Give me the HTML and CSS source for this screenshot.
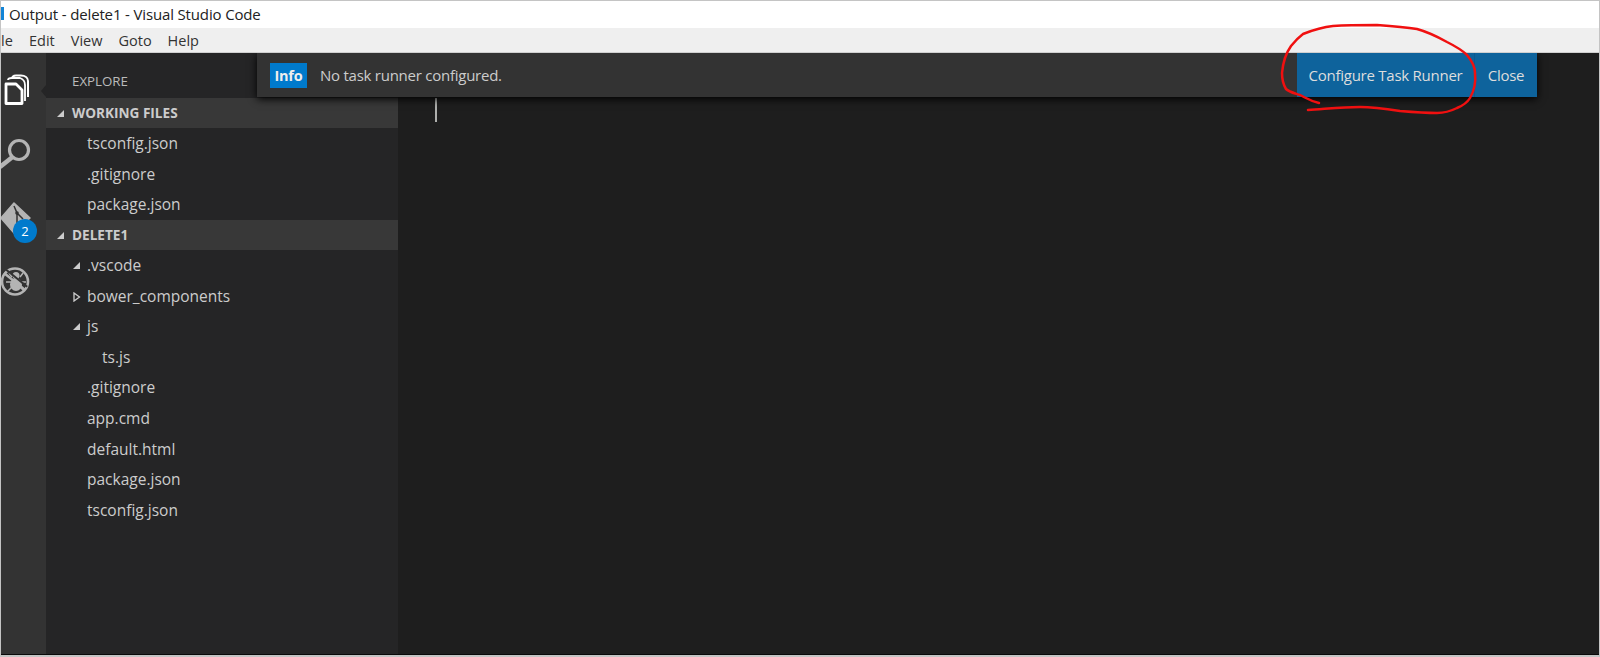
FILE: index.html
```html
<!DOCTYPE html>
<html lang="en">
<head>
<meta charset="utf-8">
<title>Output - delete1 - Visual Studio Code</title>
<link rel="stylesheet" href="styles.css">
</head>
<body>
<div class="window">
  <header class="titlebar"><span class="app-mark"></span><span class="title-text">Output - delete1 - Visual Studio Code</span></header>
  <nav class="menubar"><span class="menu-cut">le</span><span>Edit</span><span>View</span><span>Goto</span><span>Help</span></nav>
  <main class="workbench">
    <aside class="activity">
      <div class="action">
        <svg width="45" height="63" viewBox="0 0 45 63">
          <path d="M11 19 C11 16.500 13 15.500 15 15.500 H20 C24 15.500 27 17.500 27 21 V37" class="i-white" stroke-width="2"/>
          <path d="M7 20 C7 18.500 9 18 11 18 H19 C22 19 24 21 24 25 V41" class="i-white" stroke-width="1.800"/>
          <path d="M5 24 H15 L21 30 V43.500 H5 Z" class="i-white" stroke-width="2.800" stroke-linejoin="round"/>
        </svg>
      </div>
      <div class="action">
        <svg width="45" height="63" viewBox="0 0 45 63">
          <circle cx="18" cy="27" r="9.500" class="i-grey" stroke-width="3.200"/>
          <path d="M11.500 34 L-1 44" class="i-grey" stroke-width="4.500"/>
        </svg>
      </div>
      <div class="action">
        <svg width="45" height="63" viewBox="0 0 45 63">
          <path d="M13 17 L29 32 L13 47 L0 32 Z" fill="#b4b4b4" stroke="#b4b4b4" stroke-width="1.500" stroke-linejoin="round"/>
          <path d="M13 20 L16 27 V40 M16 27 L22 33" fill="none" stroke="#333" stroke-width="1.500"/>
          <circle cx="16" cy="27" r="1.800" fill="#333"/>
        </svg>
        <span class="badge">2</span>
      </div>
      <div class="action">
        <svg width="45" height="63" viewBox="0 0 45 63">
          <circle cx="14" cy="32.500" r="13" class="i-grey" stroke-width="2.600"/>
          <ellipse cx="15" cy="35.500" rx="6" ry="6.500" fill="#b4b4b4"/>
          <circle cx="15" cy="26.500" r="3.500" fill="#b4b4b4"/>
          <path d="M8 24 L11 28 M22 24 L19 28 M5 33 H10 M20 33 H25 M7 42 L11 38 M23 42 L19 38" class="i-grey" stroke-width="1.500"/>
          <path d="M4 22.500 L25 39.500" stroke="#333" stroke-width="2" fill="none" transform="translate(1.200 -1.800)"/>
          <path d="M3 24 L24 41" class="i-grey" stroke-width="2.600"/>
        </svg>
      </div>
    </aside>
    <section class="sidebar">
      <div class="sidebar-title">EXPLORE</div>
      <div class="section-head"><span class="tw tw-open"></span>WORKING FILES</div>
      <div class="row l1">tsconfig.json</div>
      <div class="row l1">.gitignore</div>
      <div class="row l1">package.json</div>
      <div class="section-head"><span class="tw tw-open"></span>DELETE1</div>
      <div class="row l0"><span class="tw tw-open"></span>.vscode</div>
      <div class="row l0"><svg class="tw-closed" width="8" height="10" viewBox="0 0 8 10"><path d="M1 1 L6.500 5 L1 9 Z" fill="none" stroke="#ccc" stroke-width="1.300"/></svg>bower_components</div>
      <div class="row l0"><span class="tw tw-open"></span>js</div>
      <div class="row l2">ts.js</div>
      <div class="row l1">.gitignore</div>
      <div class="row l1">app.cmd</div>
      <div class="row l1">default.html</div>
      <div class="row l1">package.json</div>
      <div class="row l1">tsconfig.json</div>
    </section>
    <section class="editor"><div class="cursor"></div></section>
    <span class="notch"></span>
    <div class="notification">
      <span class="info-tag">Info</span>
      <span class="message">No task runner configured.</span>
      <span class="btn btn-first">Configure Task Runner</span>
      <span class="btn btn-last">Close</span>
    </div>
  </main>
  <svg class="scribble" width="1600" height="657" viewBox="0 0 1600 657">
    <path d="M1319 103 C1310 101 1306 98 1300 95 C1294 93 1289 92 1286 89 C1283 84 1282 79 1282 73 C1283 62 1286 53 1291 46 C1295 41 1299 37 1303 34 C1313 30 1323 27 1333 26 C1348 25 1362 25 1377 25 C1392 26 1405 27 1417 29 C1428 32 1438 37 1447 42 C1455 46 1462 50 1467 55 C1472 61 1475 67 1475 73 C1476 82 1474 91 1470 98 C1467 103 1462 106 1457 108 C1451 111 1444 113 1437 113 C1424 113 1412 112 1400 111 C1387 109 1374 107 1360 107 C1342 107 1325 109 1308 110" fill="none" stroke="#f01010" stroke-width="2.500" stroke-linecap="round"/>
  </svg>
</div>
</body>
</html>
```

FILE: styles.css
```css
* { box-sizing: border-box; }
html, body { margin: 0; height: 100%; background: #fff; overflow: hidden; }
body { font-family: "Open Sans", "Noto Sans", sans-serif; }

.window {
  position: relative;
  width: 1600px;
  height: 657px;
  display: flex;
  flex-direction: column;
  border: 1px solid #c4c4c4;
  border-bottom-width: 2px;
  overflow: hidden;
}

.titlebar {
  height: 27px;
  flex: none;
  background: #fff;
  display: flex;
  align-items: center;
  padding-bottom: 2px;
  color: #222;
  font-size: 15px;
  letter-spacing: -0.15px;
}
.app-mark { width: 3px; height: 13px; background: #1284d6; margin-right: 5px; }

.menubar {
  height: 25px;
  flex: none;
  background: #efefef;
  border-bottom: 1px solid #d0d0d0;
  display: flex;
  align-items: center;
  gap: 16px;
  color: #333;
  font-size: 14.500px;
}
.menu-cut { width: 12px; }

.workbench { flex: 1; display: flex; position: relative; min-height: 0; overflow: hidden; background: #1e1e1e; border-bottom: 1px solid #0a0a0a; }

.activity { width: 45px; flex: none; background: #333; padding-top: 7px; display: flex; flex-direction: column; }
.action { height: 63px; position: relative; }
.action svg { display: block; overflow: hidden; }
.i-white { fill: none; stroke: #fff; }
.i-grey { fill: none; stroke: #b4b4b4; }
.badge {
  position: absolute;
  left: 12px;
  top: 33px;
  width: 24px;
  height: 24px;
  border-radius: 50%;
  background: #007acc;
  color: #fff;
  font-size: 13px;
  display: flex;
  align-items: center;
  justify-content: center;
}

.sidebar { width: 352px; flex: none; background: #252526; color: #ccc; font-size: 15.500px; }
.sidebar-title { height: 45px; padding: 10px 0 0 26px; display: flex; align-items: center; font-size: 13.300px; color: #bbb; }
.section-head {
  height: 30px;
  background: #383838;
  display: flex;
  align-items: center;
  padding: 0 0 1px 26px;
  position: relative;
  font-size: 13.600px;
  font-weight: 700;
  color: #ccc;
}
.section-head .tw { left: 11px; }
.row { height: 30.600px; display: flex; align-items: center; position: relative; white-space: nowrap; }
.l0 { padding-left: 41px; }
.l1 { padding-left: 41px; }
.l2 { padding-left: 56px; }
.tw { position: absolute; top: 50%; }
.l0 .tw { left: 27px; }
.tw-open {
  width: 0; height: 0; margin-top: -3px;
  border-style: solid;
  border-width: 0 0 7px 7px;
  border-color: transparent transparent #ccc transparent;
}
.tw-closed { position: absolute; left: 27px; top: 50%; margin-top: -4px; }

.editor { flex: 1; position: relative; }
.cursor { position: absolute; left: 37px; top: 45px; width: 2px; height: 24px; background: #aeafad; }

.notch {
  position: absolute;
  left: 40px;
  top: 32px;
  border-style: solid;
  border-width: 6px 5px 6px 0;
  border-color: transparent #252526 transparent transparent;
}

.notification {
  position: absolute;
  left: 256px;
  top: 0;
  width: 1280px;
  height: 44px;
  background: #333;
  box-shadow: 0 2px 8px #000;
  display: flex;
  align-items: stretch;
  color: #ccc;
  font-size: 15px;
  letter-spacing: -0.25px;
}
.info-tag {
  align-self: center;
  margin-left: 13px;
  width: 37px;
  height: 25px;
  background: #007acc;
  color: #eee;
  font-weight: 700;
  font-size: 14.500px;
  display: flex;
  align-items: center;
  justify-content: center;
}
.message { margin-left: 13px; flex: 1; display: flex; align-items: center; }
.btn { background: #0e639c; color: #ddd; display: flex; align-items: center; justify-content: center; }
.btn-first { width: 178px; border-right: 1px solid #0c5a90; }
.btn-last { width: 62px; }

.scribble { position: absolute; left: -1px; top: -1px; pointer-events: none; }
```
